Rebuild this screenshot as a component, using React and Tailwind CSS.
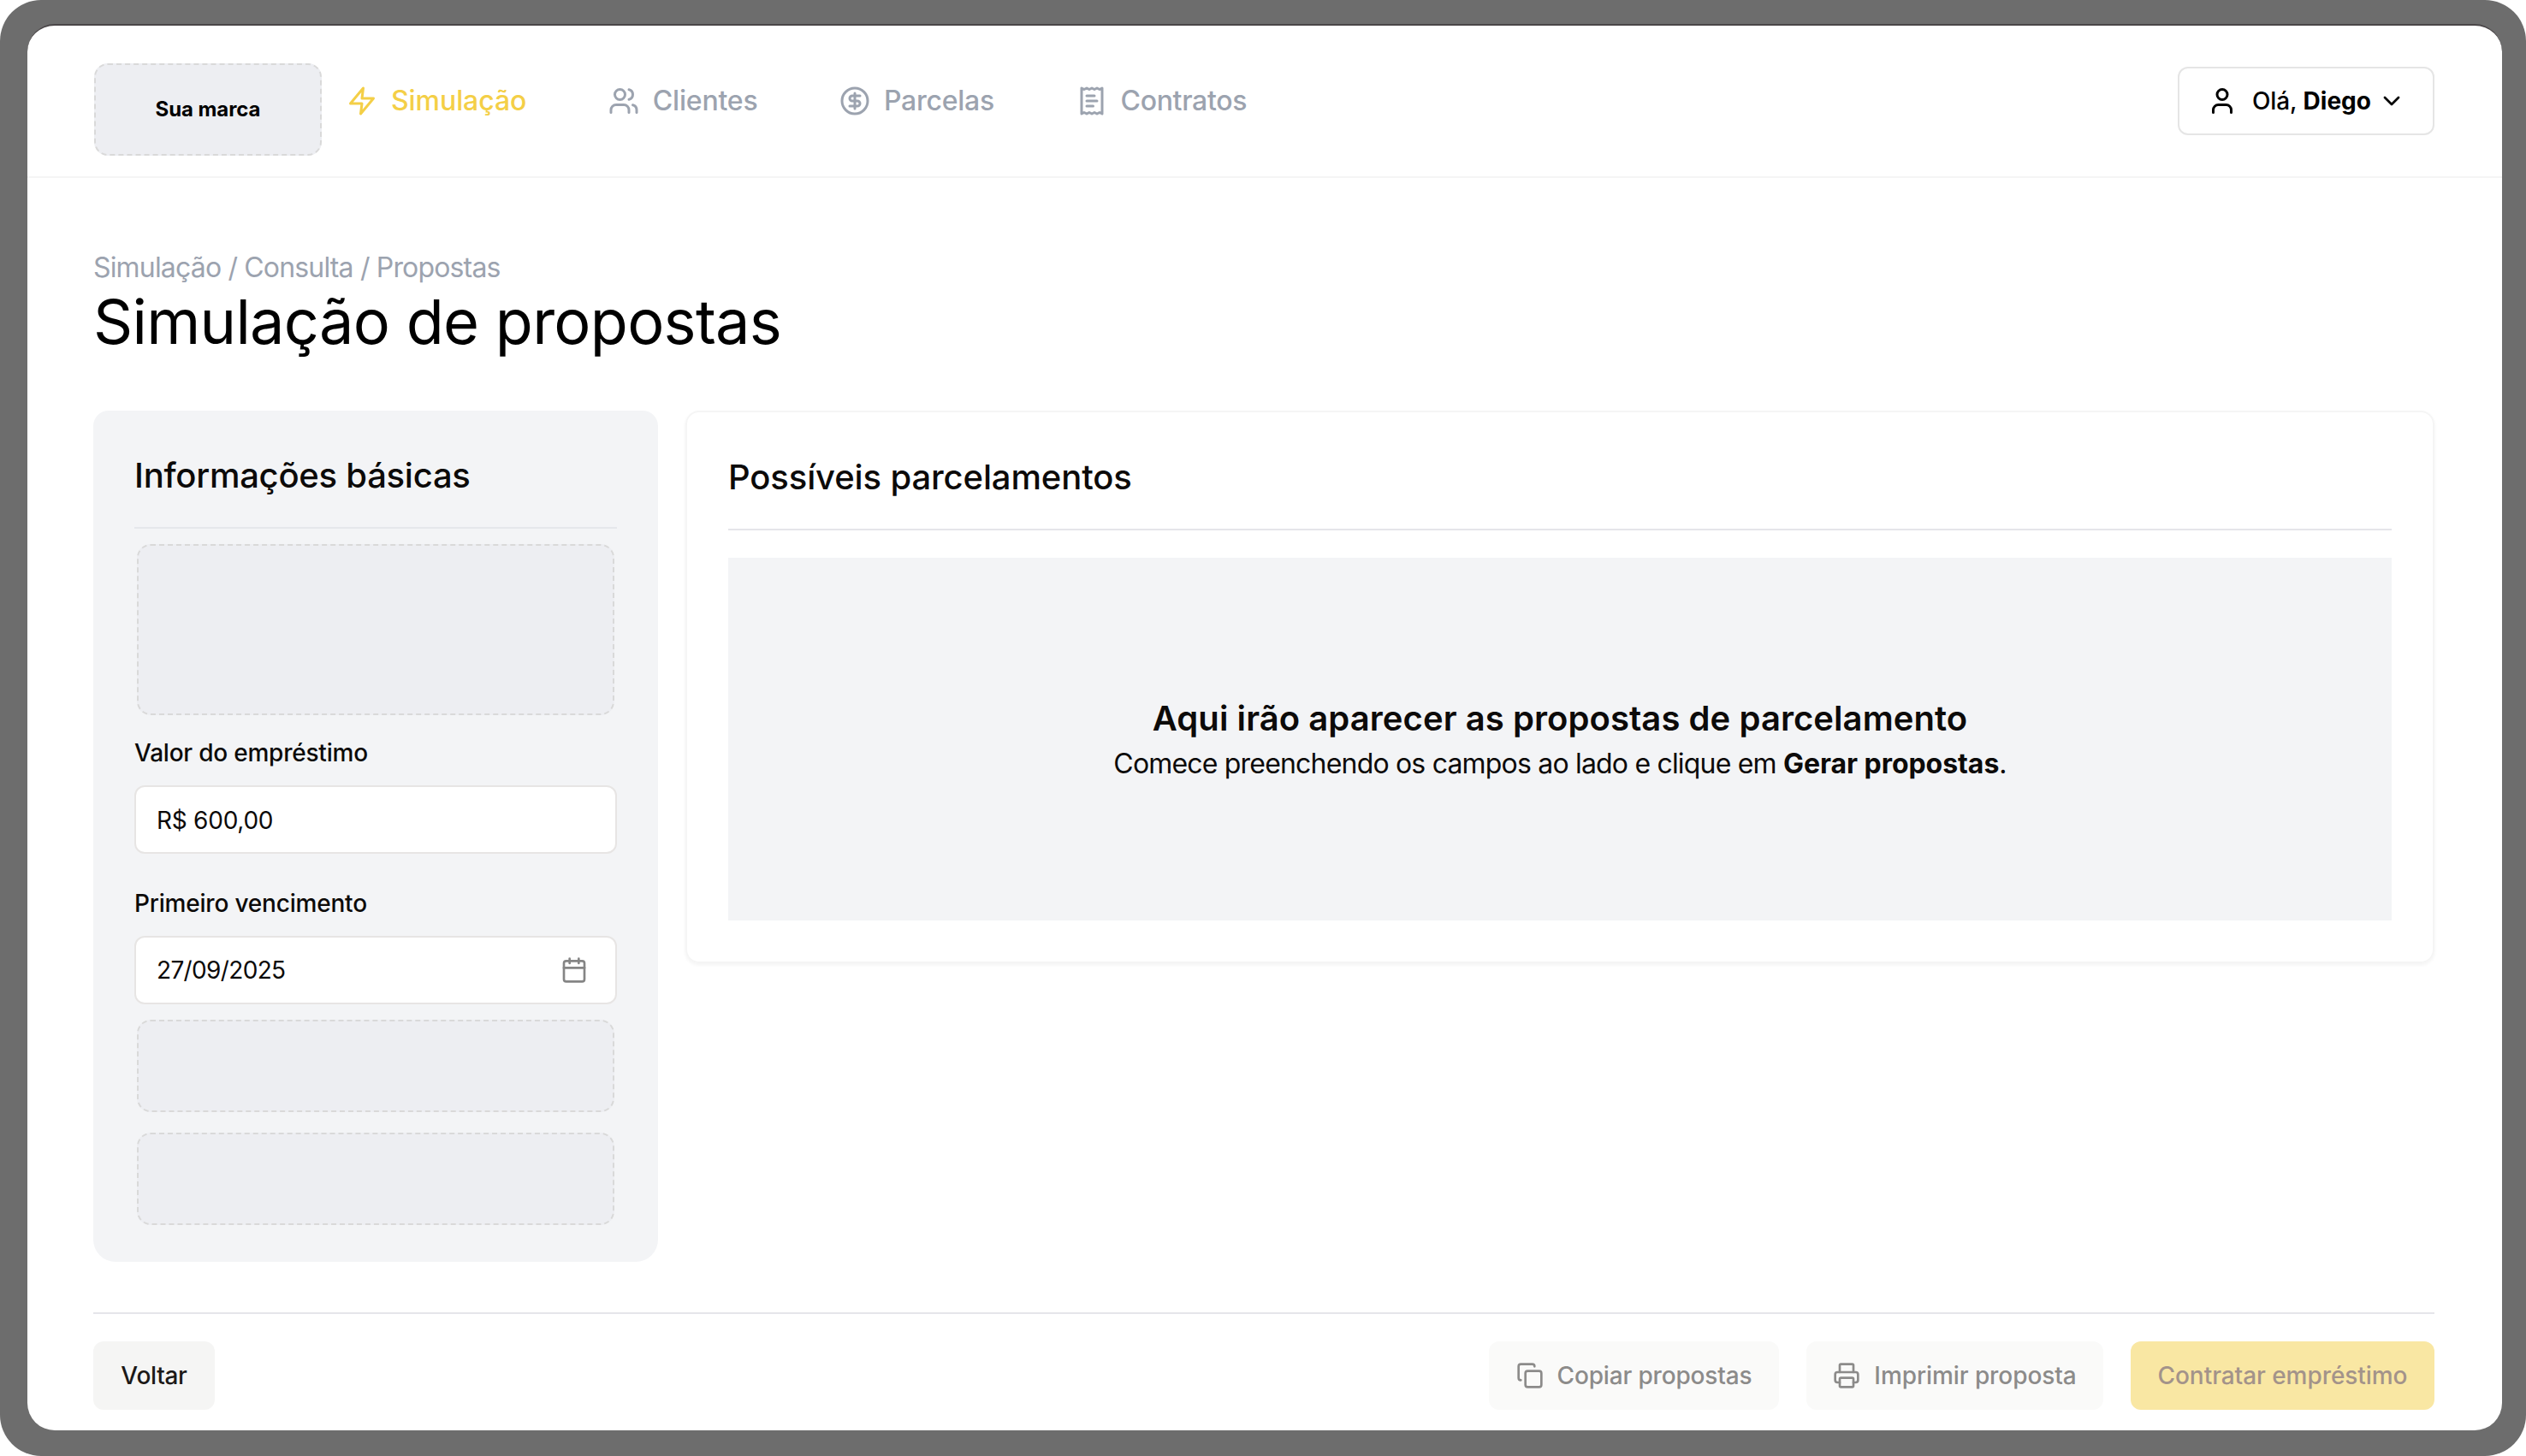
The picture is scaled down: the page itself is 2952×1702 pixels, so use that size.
import React, { useState } from 'react';
import { Calendar, ChevronDown, CircleDollarSign, Copy, Printer, User, Users } from 'lucide-react';

const cn = (...classes) => classes.filter(Boolean).join(' ');

// ═══════════════════════════════════════════════════════════════
// ICONS
// ═══════════════════════════════════════════════════════════════
const BoltIcon = ({ className }) => (
  <svg
    className={className}
    viewBox="0 0 24 24"
    fill="none"
    stroke="currentColor"
    strokeWidth="2"
    strokeLinecap="round"
    strokeLinejoin="round"
  >
    <polygon points="13 2 3 14 12 14 11 22 21 10 12 10 13 2" />
  </svg>
);

const ReceiptIcon = ({ className }) => (
  <svg
    className={className}
    viewBox="0 0 24 24"
    fill="none"
    stroke="currentColor"
    strokeWidth="2"
    strokeLinecap="round"
    strokeLinejoin="round"
  >
    <path d="M4 2v20l2-1 2 1 2-1 2 1 2-1 2 1 2-1 2 1V2l-2 1-2-1-2 1-2-1-2 1-2-1-2 1Z" />
    <path d="M14 8H8" />
    <path d="M16 12H8" />
    <path d="M13 16H8" />
  </svg>
);

const NAV_ITEMS = [
  { id: 'simulacao', label: 'Simulação', icon: BoltIcon, tracking: 'tracking-[-0.07px]' },
  { id: 'clientes', label: 'Clientes', icon: Users, tracking: 'tracking-[-0.2px]' },
  { id: 'parcelas', label: 'Parcelas', icon: CircleDollarSign, tracking: 'tracking-[-0.25px]' },
  { id: 'contratos', label: 'Contratos', icon: ReceiptIcon, tracking: 'tracking-[-0.32px]' }
];

// ═══════════════════════════════════════════════════════════════
// SHARED PIECES
// ═══════════════════════════════════════════════════════════════
const Placeholder = ({ className, children }) => (
  <div
    className={cn(
      'flex items-center justify-center rounded-2xl border-2 border-dashed border-[#d9d9d9] bg-[#edeef2]',
      className
    )}
  >
    {children}
  </div>
);

const Field = ({ label, value, onChange, labelClass, inputClass, icon: Icon }) => (
  <label className="flex flex-col gap-6">
    <span className={cn('text-[28px] leading-none font-medium', labelClass)}>{label}</span>
    <span className="flex h-20 items-center rounded-xl border-2 border-[#e7e5e4] bg-white pr-8 pl-6">
      <input
        value={value}
        onChange={(e) => onChange(e.target.value)}
        className={cn('min-w-0 flex-1 bg-transparent text-[28px] outline-none', inputClass)}
      />
      {Icon && <Icon className="size-8 text-[#858585]" />}
    </span>
  </label>
);

const Button = ({ icon: Icon, className, children, ...props }) => (
  <button
    className={cn(
      'flex h-20 items-center justify-center gap-4 rounded-xl text-[28px] font-medium whitespace-nowrap',
      className
    )}
    {...props}
  >
    {Icon && <Icon className="size-8 shrink-0" />}
    {children}
  </button>
);

// ═══════════════════════════════════════════════════════════════
// HEADER
// ═══════════════════════════════════════════════════════════════
const Header = ({ active, onSelect }) => (
  <header className="flex h-[178px] items-start border-b-2 border-[#f5f5f5] pt-11 pr-[79px] pl-[78px]">
    <Placeholder className="h-[108px] w-[266px]">
      <span className="text-2xl font-bold tracking-[-0.08px]">Sua marca</span>
    </Placeholder>

    <nav className="mt-1 ml-[29px] flex h-20 items-center gap-[95.5px]">
      {NAV_ITEMS.map(({ id, label, icon: Icon, tracking }) => (
        <button
          key={id}
          onClick={() => onSelect(id)}
          className={cn(
            'flex items-center gap-4 text-[32px] leading-[46px] font-medium',
            tracking,
            active === id ? 'text-[#f4cf47]' : 'text-[#9ca3af]'
          )}
        >
          <Icon className="size-9" />
          {label}
        </button>
      ))}
    </nav>

    <button className="mt-1 ml-auto flex h-20 w-[300px] items-center rounded-xl border-2 border-[#e5e5e5] pl-8 text-[28px]">
      <User className="size-9" />
      <span className="ml-[17px] font-medium tracking-[-0.1px]">
        Olá, <strong className="font-bold tracking-normal">Diego</strong>
      </span>
      <ChevronDown className="ml-2 size-8" />
    </button>
  </header>
);

// ═══════════════════════════════════════════════════════════════
// MAIN COMPONENT
// ═══════════════════════════════════════════════════════════════
const App = () => {
  const [active, setActive] = useState('simulacao');
  const [amount, setAmount] = useState('R$ 600,00');
  const [dueDate, setDueDate] = useState('27/09/2025');

  return (
    <div className="h-[1702px] w-[2952px] bg-white font-['Inter',sans-serif] text-black">
      <div className="h-full rounded-[48px] bg-[#6d6d6d] px-8 pt-7 pb-[30px] pr-7">
        <div className="flex h-full flex-col overflow-hidden rounded-[32px] border-t-2 border-[#4a4648] bg-white">
          <Header active={active} onSelect={setActive} />

          <main className="flex flex-1 flex-col pt-[81px] pr-[79px] pb-6 pl-[77px]">
            <p className="text-[32px] leading-[48px] tracking-[-0.83px] text-[#9ca3af]">
              Simulação / Consulta / Propostas
            </p>
            <h1 className="text-7xl leading-[78px] tracking-[-0.72px]">Simulação de propostas</h1>

            <div className="mt-[65px] flex items-start gap-8 text-[#0c0a09]">
              {/* Basic info */}
              <section className="flex h-[995px] w-[660px] flex-col rounded-t-[18px] rounded-b-[26px] bg-gray-100 px-12 pt-12">
                <h2 className="border-b-2 border-gray-200 pb-8 text-[40px] leading-[56px] font-medium tracking-[-0.26px]">
                  Informações básicas
                </h2>
                <Placeholder className="mx-[3px] mt-[18px] h-[200px]" />
                <div className="mt-[30px] flex flex-col gap-11">
                  <Field
                    label="Valor do empréstimo"
                    value={amount}
                    onChange={setAmount}
                    labelClass="tracking-[-0.22px]"
                    inputClass="pt-0.5 tracking-[-0.25px]"
                  />
                  <Field
                    label="Primeiro vencimento"
                    value={dueDate}
                    onChange={setDueDate}
                    labelClass="tracking-[-0.2px]"
                    inputClass="tracking-[-0.65px]"
                    icon={Calendar}
                  />
                </div>
                <div className="mx-[3px] mt-[18px] flex flex-col gap-6">
                  <Placeholder className="h-[108px]" />
                  <Placeholder className="h-[108px]" />
                </div>
              </section>

              {/* Proposals */}
              <section className="flex h-[646px] flex-1 flex-col rounded-2xl border-2 border-[#f5f5f5] px-12 pt-12 pb-12 shadow-[0_2px_4px_rgba(0,0,0,0.05)]">
                <h2 className="border-b-2 border-[#e5e5ea] pb-8 text-[40px] leading-[56px] font-medium tracking-[-0.13px]">
                  Possíveis parcelamentos
                </h2>
                <div className="mt-8 flex flex-1 flex-col items-center justify-center bg-gray-100">
                  <p className="text-[40px] leading-[56px] font-semibold tracking-[0.066px]">
                    Aqui irão aparecer as propostas de parcelamento
                  </p>
                  <p className="pt-px text-[32px] leading-[48px] tracking-[-0.81px]">
                    Comece preenchendo os campos ao lado e clique em{' '}
                    <strong className="font-bold tracking-[-0.05px]">Gerar propostas</strong>.
                  </p>
                </div>
              </section>
            </div>

            <footer className="mt-auto flex items-center gap-8 border-t-2 border-[#e5e5ea] pt-8">
              <Button className="w-[142px] bg-[#f5f5f4] tracking-[-0.3px] text-[#1c1917]">Voltar</Button>
              <Button
                icon={Copy}
                disabled
                className="ml-auto w-[339px] bg-[#fafaf9] tracking-[-0.16px] text-[#8c8b8a]"
              >
                Copiar propostas
              </Button>
              <Button
                icon={Printer}
                disabled
                className="w-[347px] bg-[#fafaf9] tracking-[-0.08px] text-[#8c8b8a]"
              >
                Imprimir proposta
              </Button>
              <Button disabled className="w-[355px] bg-[#f9e7a3] tracking-[-0.06px] text-[#a3938a]">
                Contratar empréstimo
              </Button>
            </footer>
          </main>
        </div>
      </div>
    </div>
  );
};

export default App;
